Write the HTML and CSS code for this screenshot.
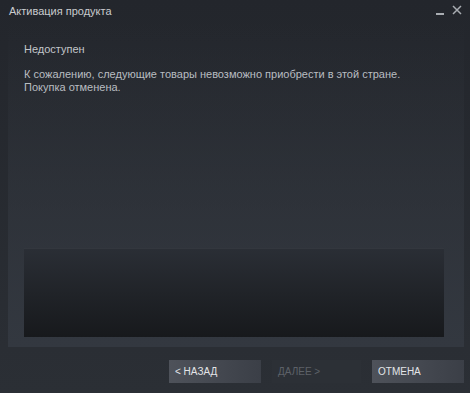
FILE: index.html
```html
<!DOCTYPE html>
<html lang="ru">
<head>
  <meta charset="UTF-8" />
  <title>Активация продукта</title>
  <link rel="stylesheet" href="styles.css">
</head>
<body>
  <div class="window">
    <div class="titlebar">
      <span class="title">Активация продукта</span>
      <span class="controls">
        <svg class="min" width="9" height="9" viewBox="0 0 9 9"><rect x="0" y="7" width="8" height="2" fill="#a9adb2"/></svg>
        <svg class="close" width="10" height="10" viewBox="0 0 10 10"><path d="M1 1 L9 9 M9 1 L1 9" stroke="#a9adb2" stroke-width="1.5"/></svg>
      </span>
    </div>

    <div class="panel">
      <p class="heading">Недоступен</p>
      <p class="message">К сожалению, следующие товары невозможно приобрести в этой стране.<br>Покупка отменена.</p>
      <div class="list"></div>
    </div>

    <div class="buttons">
      <button class="btn">&lt; НАЗАД</button>
      <button class="btn disabled">ДАЛЕЕ &gt;</button>
      <button class="btn">ОТМЕНА</button>
    </div>
  </div>
</body>
</html>
```

FILE: styles.css
```css
html, body {
  margin: 0;
  padding: 0;
}
body {
  background: #262a30;
  font-family: Arial, "Liberation Sans", sans-serif;
  font-size: 11px;
}
.window {
  width: 470px;
  height: 393px;
  display: flex;
  flex-direction: column;
  background: linear-gradient(to bottom, #23262c, #2b2f35);
}
.titlebar {
  height: 22px;
  display: flex;
  align-items: center;
  justify-content: space-between;
  padding: 0 8px 0 9px;
  flex-shrink: 0;
}
.title {
  color: #c9cccf;
}
.controls {
  display: flex;
  align-items: flex-end;
  gap: 7px;
  margin-top: -2px;
}
.panel {
  margin: 0 6px 0 8px;
  height: 325px;
  box-sizing: border-box;
  padding: 20px 20px 10px 16px;
  display: flex;
  flex-direction: column;
  background: linear-gradient(to bottom, rgba(52,57,65,0) 0%, rgba(52,57,65,0.5) 55%, #333840 100%);
}
.heading {
  margin: 0;
  color: #c3c6ca;
  line-height: 14px;
}
.message {
  margin: 12px 0 0;
  color: #b9bdc1;
  line-height: 13px;
}
.list {
  margin-top: auto;
  height: 88px;
  background: linear-gradient(to bottom, #2a2e35, #17191c);
  border-top: 1px solid #33373e;
}
.buttons {
  display: flex;
  justify-content: flex-end;
  gap: 11px;
  padding: 13px 6px 0 0;
}
.btn {
  width: 92px;
  height: 23px;
  border: none;
  border-radius: 0;
  padding: 0 6px;
  text-align: left;
  font-family: Arial, "Liberation Sans", sans-serif;
  font-size: 10px;
  color: #e3e5e8;
  background: linear-gradient(to right, #4e525a, #3b3f47);
}
.btn.disabled {
  width: 89px;
  color: #5d6168;
  background: #2c3036;
}
```
